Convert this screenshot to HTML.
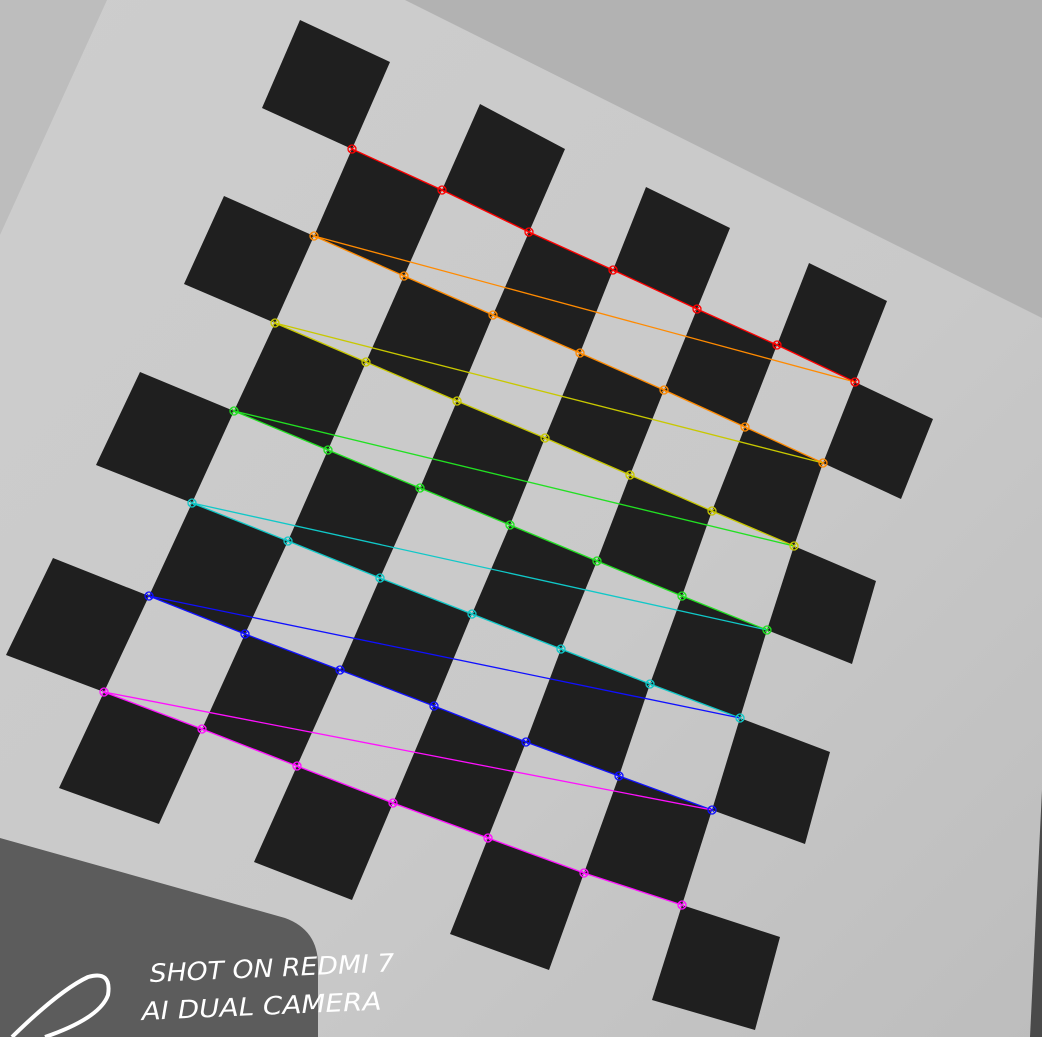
<!DOCTYPE html>
<html><head><meta charset="utf-8"><style>
html,body{margin:0;padding:0;width:1042px;height:1037px;overflow:hidden;background:#c6c6c6}
svg{display:block}
</style></head><body>
<svg id="s" width="1042" height="1037" viewBox="0 0 1042 1037" xmlns="http://www.w3.org/2000/svg">
<defs>
<linearGradient id="pg" x1="0" y1="0" x2="1" y2="1">
<stop offset="0" stop-color="#cdcdcd"/><stop offset="0.6" stop-color="#c9c9c9"/><stop offset="1" stop-color="#bdbdbd"/>
</linearGradient>
</defs>
<rect width="1042" height="1037" fill="url(#pg)"/>
<polygon points="0,0 107,0 0,235" fill="#bdbdbd"/>
<polygon points="405,0 1042,0 1042,318" fill="#b2b2b2"/>
<g id="board"></g>
<path d="M0,838 L285,918 Q318,930 318,965 L318,1037 L0,1037 Z" fill="#5c5c5c"/>
<polygon points="1042,790 1042,1037 1030,1037" fill="#4a4a4a"/>
<path d="M12,1037 Q60,990 88,977 Q112,970 108,995 Q100,1018 45,1037" fill="none" stroke="#fff" stroke-width="4"/>
<g fill="#fff" font-family="'DejaVu Sans','Liberation Sans',sans-serif" font-size="25">
<text x="150" y="982" transform="rotate(-2.5 150 982)" textLength="245" lengthAdjust="spacingAndGlyphs" font-style="italic">SHOT ON REDMI 7</text>
<text x="142" y="1020" transform="rotate(-2.5 142 1020)" textLength="240" lengthAdjust="spacingAndGlyphs" font-style="italic">AI DUAL CAMERA</text>
</g>
<g id="marks"></g>
</svg>
<script>
(function(){
var R=[
[[352,149],[442,190],[529,232],[613,270],[697,309],[777,345],[855,382]],
[[314,236],[404,276],[493,315],[580,353],[664,390],[745,427],[823,463]],
[[275,323],[366,362],[457,401],[545,438],[630,475],[712,511],[794,546]],
[[234,411],[328,450],[420,488],[510,525],[597,561],[682,596],[767,630]],
[[192,503],[288,541],[380,578],[472,614],[561,649],[650,684],[740,718]],
[[149,596],[245,634],[340,670],[434,706],[526,742],[619,776],[712,810]],
[[104,692],[202,729],[297,766],[393,803],[488,838],[584,873],[682,905]]];
function ex(a,b){return [2*a[0]-b[0],2*a[1]-b[1]];}
var E=R.map(function(r){var n=r.slice();n.unshift(ex(r[0],r[1]));n.push(ex(r[6],r[5]));return n;});
var tRow=E[0].map(function(p,i){return ex(p,E[1][i]);});
var bRow=E[6].map(function(p,i){return ex(p,E[5][i]);});
E.unshift(tRow);E.push(bRow);
var ns="http://www.w3.org/2000/svg",bd=document.getElementById('board');
for(var i=0;i<8;i++)for(var j=0;j<8;j++){if((i+j)%2)continue;
var p=[E[i][j],E[i][j+1],E[i+1][j+1],E[i+1][j]];
var e=document.createElementNS(ns,'polygon');e.setAttribute('points',p.map(function(q){return q.join(',')}).join(' '));e.setAttribute('fill','#1f1f1f');bd.appendChild(e);}
var C=['#ff0000','#ff8a00','#c8c800','#22e022','#10c8c8','#1010ff','#ff10ff'],m=document.getElementById('marks');
var pts=[];R.forEach(function(r,i){r.forEach(function(p){pts.push([p,C[i]]);});});
for(var k=0;k<pts.length-1;k++){var l=document.createElementNS(ns,'line');var a=pts[k][0],c=pts[k+1][0];
l.setAttribute('x1',a[0]);l.setAttribute('y1',a[1]);l.setAttribute('x2',c[0]);l.setAttribute('y2',c[1]);l.setAttribute('stroke',pts[k+1][1]);l.setAttribute('stroke-width','1.3');m.appendChild(l);}
pts.forEach(function(q){var p=q[0];var g=document.createElementNS(ns,'circle');g.setAttribute('cx',p[0]);g.setAttribute('cy',p[1]);g.setAttribute('r','4');g.setAttribute('fill','none');g.setAttribute('stroke',q[1]);g.setAttribute('stroke-width','1.3');m.appendChild(g);
var x=document.createElementNS(ns,'path');x.setAttribute('d','M'+(p[0]-3)+','+(p[1]-3)+'L'+(p[0]+3)+','+(p[1]+3)+'M'+(p[0]+3)+','+(p[1]-3)+'L'+(p[0]-3)+','+(p[1]+3));x.setAttribute('stroke',q[1]);x.setAttribute('stroke-width','1');m.appendChild(x);});
})();
</script>
</body></html>
